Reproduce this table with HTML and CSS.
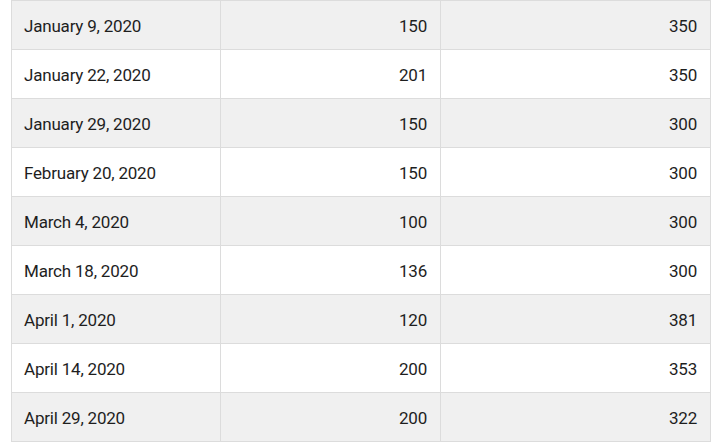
FILE: index.html
```html
<!DOCTYPE html>
<html>
<head>
<meta charset="utf-8">
<link rel="stylesheet" href="styles.css">
</head>
<body>
<div class="wrap">
<table class="data">
<colgroup><col class="c1"><col class="c2"><col class="c3"></colgroup>
<tbody>
<tr><td>January 9, 2020</td><td class="num">150</td><td class="num">350</td></tr>
<tr><td>January 22, 2020</td><td class="num">201</td><td class="num">350</td></tr>
<tr><td>January 29, 2020</td><td class="num">150</td><td class="num">300</td></tr>
<tr><td>February 20, 2020</td><td class="num">150</td><td class="num">300</td></tr>
<tr><td>March 4, 2020</td><td class="num">100</td><td class="num">300</td></tr>
<tr><td>March 18, 2020</td><td class="num">136</td><td class="num">300</td></tr>
<tr><td>April 1, 2020</td><td class="num">120</td><td class="num">381</td></tr>
<tr><td>April 14, 2020</td><td class="num">200</td><td class="num">353</td></tr>
<tr><td>April 29, 2020</td><td class="num">200</td><td class="num">322</td></tr>
</tbody>
</table>
</div>
</body>
</html>
```
FILE: styles.css
```css
html, body {
  margin: 0;
  padding: 0;
  background: #fff;
}
.wrap {
  padding: 0 11px;
}
.data {
  border-collapse: collapse;
  table-layout: fixed;
  width: 700px;
  font-family: Roboto, "Liberation Sans", sans-serif;
  font-size: 17px;
  letter-spacing: -0.2px;
  color: #1e1e1e;
}
.c1 { width: 209px; }
.c2 { width: 220px; }
.c3 { width: 270px; }
.data td {
  border: 1px solid #dcdcdc;
  height: 49px;
  padding: 2px 12px 0;
  box-sizing: border-box;
  line-height: 20px;
  vertical-align: middle;
}
.data tr:nth-child(odd) td {
  background: #f0f0f0;
}
.data td.num {
  text-align: right;
  padding-right: 13px;
}
```
